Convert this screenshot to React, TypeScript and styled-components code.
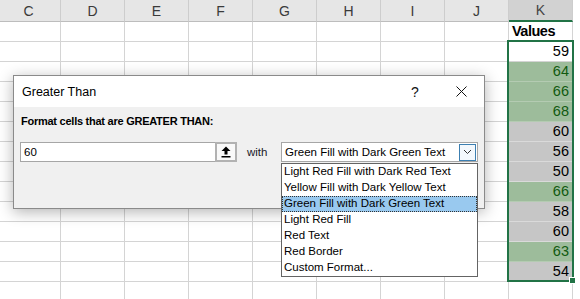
import React from 'react';
import styled, { createGlobalStyle, css } from 'styled-components';

const GlobalStyle = createGlobalStyle`
  html, body { margin: 0; padding: 0; background: #fff; }
  body { width: 580px; height: 299px; overflow: hidden; }
`;

const Sheet = styled.div`
  position: relative;
  width: 580px;
  height: 299px;
  overflow: hidden;
  background: #fff;
  font-family: "Liberation Sans", Arial, sans-serif;
`;

const Grid = styled.div`
  display: grid;
  grid-template-columns: repeat(9, 64px);
  grid-template-rows: 22px;
  grid-auto-rows: 20px;
  margin-left: -3px;
  width: max-content;
`;

const HeaderCell = styled.div<{ $selected?: boolean }>`
  box-sizing: border-box;
  display: flex;
  align-items: center;
  justify-content: center;
  background: #e6e6e6;
  border-right: 1px solid #cdcdcd;
  border-bottom: 1px solid #bdbdbd;
  font-size: 14px;
  color: #3a3a3a;
  ${(p) =>
    p.$selected &&
    css`
      background: #d2d2d2;
      border-bottom: 2px solid #217346;
      color: #444;
    `}
`;

type Fill = 'none' | 'green' | 'sel';

const Cell = styled.div<{ $fill?: Fill; $bold?: boolean; $left?: boolean }>`
  box-sizing: border-box;
  display: flex;
  align-items: flex-end;
  justify-content: ${(p) => (p.$left ? 'flex-start' : 'flex-end')};
  padding: 0 3px 1px 3px;
  border-right: 1px solid #d4d4d4;
  border-bottom: 1px solid #d4d4d4;
  font-size: 14.5px;
  line-height: 17px;
  color: #000;
  font-weight: ${(p) => (p.$bold ? 700 : 400)};
  letter-spacing: ${(p) => (p.$bold ? '-0.5px' : '0')};
  ${(p) =>
    p.$fill === 'green' &&
    css`
      background: #9dbc9b;
      color: #115a10;
      border-bottom-color: #b4cbb2;
    `}
  ${(p) =>
    p.$fill === 'sel' &&
    css`
      background: #c6c6c6;
      border-bottom-color: #dadada;
    `}
`;

const Selection = styled.div`
  position: absolute;
  left: 507px;
  top: 40px;
  width: 67px;
  height: 242px;
  box-sizing: border-box;
  border: 2px solid #217346;
  pointer-events: none;
`;

const FillHandle = styled.div`
  position: absolute;
  right: -4px;
  bottom: -4px;
  width: 5px;
  height: 5px;
  background: #217346;
  border: 1px solid #fff;
`;

const Dialog = styled.div`
  position: absolute;
  left: 13px;
  top: 75px;
  width: 472px;
  height: 134px;
  box-sizing: border-box;
  border: 1px solid #8a8a8a;
  background: #f0f0f0;
  box-shadow: 0 3px 14px rgba(0, 0, 0, 0.3);
  display: flex;
  flex-direction: column;
  font-family: "Liberation Sans", Arial, sans-serif;
  font-size: 11.5px;
  color: #000;
`;

const TitleBar = styled.div`
  height: 31px;
  background: #fff;
  display: flex;
  align-items: center;
  padding-left: 8px;
`;

const TitleText = styled.div`
  flex: 1;
  font-size: 12.5px;
`;

const TitleButton = styled.div`
  width: 46px;
  height: 31px;
  display: flex;
  align-items: center;
  justify-content: center;
  font-size: 14px;
  color: #111;
`;

const Body = styled.div`
  padding: 7px 6px 0 6px;
  display: flex;
  flex-direction: column;
`;

const Prompt = styled.div`
  font-weight: 700;
  font-size: 11px;
  letter-spacing: -0.25px;
  line-height: 15px;
  padding-left: 1px;
`;

const InputRow = styled.div`
  margin-top: 13px;
  display: flex;
  align-items: center;
`;

const TextInput = styled.div`
  box-sizing: border-box;
  width: 217px;
  height: 20px;
  border: 1px solid #a6a6a6;
  background: #fff;
  display: flex;
  align-items: center;
  padding-left: 3px;
`;

const InputValue = styled.span`
  flex: 1;
`;

const RefButton = styled.div`
  box-sizing: border-box;
  width: 22px;
  height: 20px;
  margin: -1px -1px -1px 0;
  border: 2px solid #b2b2b2;
  background: #f9f9f9;
  display: flex;
  align-items: center;
  justify-content: center;
`;

const WithLabel = styled.div`
  margin-left: 10px;
  width: 34px;
  color: #1a1a2a;
`;

const Combo = styled.div`
  position: relative;
  box-sizing: border-box;
  width: 197px;
  height: 20px;
  border: 1px solid #a6a6a6;
  background: #fff;
  display: flex;
  align-items: center;
  padding-left: 3px;
`;

const ComboText = styled.span`
  flex: 1;
`;

const ComboArrow = styled.div`
  box-sizing: border-box;
  width: 17px;
  height: 17px;
  margin-right: 1px;
  border: 1px solid #3c7fb1;
  background: #f3f8fd;
  display: flex;
  align-items: center;
  justify-content: center;
`;

const List = styled.div`
  position: absolute;
  left: -1px;
  top: calc(100% + 2px);
  width: 197px;
  box-sizing: border-box;
  border: 1px solid #646464;
  background: #fff;
  display: flex;
  flex-direction: column;
  z-index: 2;
`;

const ListItem = styled.div<{ $active?: boolean }>`
  box-sizing: border-box;
  height: 16px;
  line-height: 15px;
  padding-left: 2px;
  white-space: nowrap;
  ${(p) =>
    p.$active &&
    css`
      background: #99c9ef;
      outline: 1px dotted #333;
      outline-offset: -1px;
    `}
`;

const columns = ['C', 'D', 'E', 'F', 'G', 'H', 'I', 'J', 'K'];

const values: { v: number; fill: Fill }[] = [
  { v: 59, fill: 'none' },
  { v: 64, fill: 'green' },
  { v: 66, fill: 'green' },
  { v: 68, fill: 'green' },
  { v: 60, fill: 'sel' },
  { v: 56, fill: 'sel' },
  { v: 50, fill: 'sel' },
  { v: 66, fill: 'green' },
  { v: 58, fill: 'sel' },
  { v: 60, fill: 'sel' },
  { v: 63, fill: 'green' },
  { v: 54, fill: 'sel' },
];

const options = [
  'Light Red Fill with Dark Red Text',
  'Yellow Fill with Dark Yellow Text',
  'Green Fill with Dark Green Text',
  'Light Red Fill',
  'Red Text',
  'Red Border',
  'Custom Format...',
];

const UpArrowIcon = () => (
  <svg width="10" height="12" viewBox="0 0 10 12">
    <polygon points="5,0.5 0.5,5 3.5,5 3.5,8.5 6.5,8.5 6.5,5 9.5,5" fill="#000" />
    <rect x="0.5" y="10" width="9" height="1.5" fill="#000" />
  </svg>
);

const ChevronIcon = () => (
  <svg width="9" height="6" viewBox="0 0 9 6">
    <polyline points="1,1 4.5,4.5 8,1" fill="none" stroke="#333" strokeWidth="1" />
  </svg>
);

const CloseIcon = () => (
  <svg width="11" height="11" viewBox="0 0 11 11">
    <line x1="0.5" y1="0.5" x2="10.5" y2="10.5" stroke="#111" strokeWidth="1" />
    <line x1="10.5" y1="0.5" x2="0.5" y2="10.5" stroke="#111" strokeWidth="1" />
  </svg>
);

export default function App() {
  const rows: React.ReactNode[] = [];
  const totalRows = 14;
  for (let r = 0; r < totalRows; r++) {
    columns.forEach((c) => {
      const key = `${c}${r}`;
      if (c !== 'K') {
        rows.push(<Cell key={key} />);
        return;
      }
      if (r === 0) {
        rows.push(
          <Cell key={key} $bold $left>
            Values
          </Cell>
        );
      } else if (r <= values.length) {
        const item = values[r - 1];
        rows.push(
          <Cell key={key} $fill={item.fill}>
            {item.v}
          </Cell>
        );
      } else {
        rows.push(<Cell key={key} />);
      }
    });
  }

  return (
    <>
      <GlobalStyle />
      <Sheet>
        <Grid>
          {columns.map((c) => (
            <HeaderCell key={c} $selected={c === 'K'}>
              {c}
            </HeaderCell>
          ))}
          {rows}
        </Grid>
        <Selection>
          <FillHandle />
        </Selection>
        <Dialog>
          <TitleBar>
            <TitleText>Greater Than</TitleText>
            <TitleButton>?</TitleButton>
            <TitleButton>
              <CloseIcon />
            </TitleButton>
          </TitleBar>
          <Body>
            <Prompt>Format cells that are GREATER THAN:</Prompt>
            <InputRow>
              <TextInput>
                <InputValue>60</InputValue>
                <RefButton>
                  <UpArrowIcon />
                </RefButton>
              </TextInput>
              <WithLabel>with</WithLabel>
              <Combo>
                <ComboText>Green Fill with Dark Green Text</ComboText>
                <ComboArrow>
                  <ChevronIcon />
                </ComboArrow>
                <List>
                  {options.map((o) => (
                    <ListItem key={o} $active={o === 'Green Fill with Dark Green Text'}>
                      {o}
                    </ListItem>
                  ))}
                </List>
              </Combo>
            </InputRow>
          </Body>
        </Dialog>
      </Sheet>
    </>
  );
}
